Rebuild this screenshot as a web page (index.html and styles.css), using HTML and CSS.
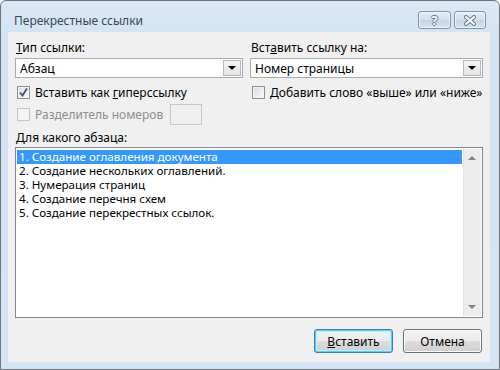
FILE: index.html
```html
<!DOCTYPE html>
<html lang="ru">
<head>
    <meta charset="UTF-8">
    <title>Перекрестные ссылки</title>
    <link rel="stylesheet" href="styles.css">
</head>
<body>
    <div class="window">
        <div class="titlebar">
            <span class="title">Перекрестные ссылки</span>
            <div class="caption-buttons">
                <span class="cap-btn help">?</span>
                <span class="cap-btn close">
                    <svg width="14" height="11" viewBox="0 0 14 11">
                        <path d="M3 2 L11 9 M11 2 L3 9" stroke="#6b7a8b" stroke-width="4" stroke-linecap="round"/>
                        <path d="M3 2 L11 9 M11 2 L3 9" stroke="#ffffff" stroke-width="2" stroke-linecap="round"/>
                    </svg>
                </span>
            </div>
        </div>

        <div class="client">
            <div class="top-grid">
                <div class="col">
                    <div class="field-label"><u>Т</u>ип ссылки:</div>
                    <div class="combo">
                        <span class="combo-value">Абзац</span>
                        <span class="combo-arrow"></span>
                    </div>
                    <div class="check">
                        <span class="box">
                            <svg width="11" height="11" viewBox="0 0 11 11">
                                <path d="M2 5.5 L4.5 8.5 L9 1.5" fill="none" stroke="#3b4f85" stroke-width="1.8"/>
                            </svg>
                        </span>
                        <span>Вставить как <u>г</u>иперссылку</span>
                    </div>
                    <div class="check disabled">
                        <span class="box"></span>
                        <span>Разделитель номеров</span>
                        <span class="small-input"></span>
                    </div>
                </div>
                <div class="col">
                    <div class="field-label">Вст<u>а</u>вить ссылку на:</div>
                    <div class="combo">
                        <span class="combo-value">Номер страницы</span>
                        <span class="combo-arrow"></span>
                    </div>
                    <div class="check">
                        <span class="box"></span>
                        <span><u>Д</u>обавить слово «выше» или «ниже»</span>
                    </div>
                </div>
            </div>

            <div class="field-label list-label"><u>Д</u>ля какого абзаца:</div>
            <div class="listbox">
                <ul class="items">
                    <li class="selected">1. Создание оглавления документа</li>
                    <li>2. Создание нескольких оглавлений.</li>
                    <li>3. Нумерация страниц</li>
                    <li>4. Создание перечня схем</li>
                    <li>5. Создание перекрестных ссылок.</li>
                </ul>
                <div class="scrollbar">
                    <span class="arrow up"></span>
                    <span class="arrow down"></span>
                </div>
            </div>

            <div class="actions">
                <button class="btn default"><u>В</u>ставить</button>
                <button class="btn">Отмена</button>
            </div>
        </div>
    </div>
</body>
</html>
```

FILE: styles.css
```css
body {
    margin: 0;
    font-family: 'Noto Sans', 'Open Sans', sans-serif;
    font-size: 12px;
    color: #000;
    background: #fff;
}
.window {
    box-sizing: border-box;
    width: 500px;
    height: 370px;
    border: 1px solid #6e747c;
    border-radius: 6px 6px 0 0;
    background: linear-gradient(#dbe8f5, #d3e3f3 40px, #d4e4f4);
    padding: 0 9px 7px 7px;
    display: flex;
    flex-direction: column;
}
.titlebar {
    height: 31px;
    display: flex;
    justify-content: space-between;
    padding: 0 4px 0 6px;
}
.title {
    color: #3a4654;
    line-height: 16px;
    margin-top: 12px;
}
.caption-buttons {
    display: flex;
    gap: 3px;
    margin-top: 10px;
}
.cap-btn {
    box-sizing: border-box;
    height: 18px;
    border: 1px solid #8293a6;
    border-radius: 3px;
    background: linear-gradient(#e6eef7, #d2dfec 50%, #c4d4e4 51%, #d6e3f0);
    box-shadow: inset 0 0 0 1px rgba(255, 255, 255, 0.6);
    display: flex;
    align-items: center;
    justify-content: center;
}
.help {
    width: 33px;
    color: #fff;
    font-weight: bold;
    font-size: 13px;
    text-shadow: 1px 0 0 #6b7a8b, -1px 0 0 #6b7a8b, 0 1px 0 #6b7a8b, 0 -1px 0 #6b7a8b;
}
.close {
    width: 32px;
}
.client {
    flex: 1;
    background: #f0f0f0;
    padding: 8px 7px 9px 7px;
    display: flex;
    flex-direction: column;
}
.top-grid {
    display: grid;
    grid-template-columns: 228px 233px;
    column-gap: 7px;
}
.field-label {
    line-height: 16px;
    margin-bottom: 2px;
    padding-left: 1px;
}
.combo {
    box-sizing: border-box;
    height: 20px;
    border: 1px solid #a5acb5;
    background: #fff;
    display: flex;
    align-items: center;
    justify-content: space-between;
    padding: 0 1px 0 4px;
}
.combo-arrow {
    box-sizing: border-box;
    width: 18px;
    height: 16px;
    border: 1px solid #b5b9c0;
    background: linear-gradient(#f4f4f4, #e3e3e3);
    position: relative;
}
.combo-arrow::after {
    content: "";
    position: absolute;
    left: 4px;
    top: 5px;
    border-left: 4px solid transparent;
    border-right: 4px solid transparent;
    border-top: 4px solid #000;
}
.check {
    display: flex;
    align-items: center;
    gap: 5px;
    height: 16px;
    margin-top: 6px;
    padding-left: 2px;
}
.box {
    box-sizing: border-box;
    width: 13px;
    height: 13px;
    border: 1px solid #8e8f8f;
    background: linear-gradient(135deg, #dcdcdc, #fbfbfb);
    box-shadow: inset 0 0 0 1px #f4f4f4;
    display: flex;
    align-items: center;
    justify-content: center;
}
.check.disabled {
    color: #8d8d8d;
    height: 21px;
    margin-top: 4px;
}
.check.disabled .box {
    border-color: #c4c4c4;
    background: #f4f4f4;
}
.small-input {
    box-sizing: border-box;
    width: 32px;
    height: 21px;
    border: 1px solid #c4c8cc;
    background: #f0f0f0;
    margin-left: 2px;
}
.list-label {
    margin-top: 5px;
    margin-bottom: 1px;
}
.listbox {
    box-sizing: border-box;
    height: 171px;
    border: 1px solid #828790;
    background: #fff;
    display: flex;
    padding: 2px 1px 1px 1px;
}
.items {
    list-style: none;
    margin: 0;
    padding: 0;
    flex: 1;
}
.items li {
    height: 14px;
    line-height: 14px;
    font-size: 11.6px;
    padding-left: 2px;
}
.items li.selected {
    background: #3399ff;
    color: #fff;
}
.scrollbar {
    width: 17px;
    margin: -1px 0 0 1px;
    background: #ececec;
    border-left: 1px solid #e2e2e2;
    position: relative;
}
.arrow {
    position: absolute;
    left: 4px;
    border-left: 4px solid transparent;
    border-right: 4px solid transparent;
}
.arrow.up {
    top: 7px;
    border-bottom: 4px solid #7f7f7f;
}
.arrow.down {
    bottom: 7px;
    border-top: 4px solid #7f7f7f;
}
.actions {
    display: flex;
    justify-content: flex-end;
    gap: 10px;
    margin-top: 11px;
    padding-right: 1px;
}
.btn {
    box-sizing: border-box;
    width: 79px;
    height: 24px;
    font-family: inherit;
    font-size: 12px;
    color: #000;
    border: 1px solid #707070;
    border-radius: 3px;
    background: linear-gradient(#f2f2f2, #ebebeb 50%, #dddddd 51%, #cfcfcf);
    box-shadow: inset 0 0 0 1px #fcfcfc;
    padding: 0;
}
.btn.default {
    border-color: #3c7fb1;
    box-shadow: inset 0 0 0 1px #48d2fc, inset 0 0 0 2px #c4ecfd;
}
```
